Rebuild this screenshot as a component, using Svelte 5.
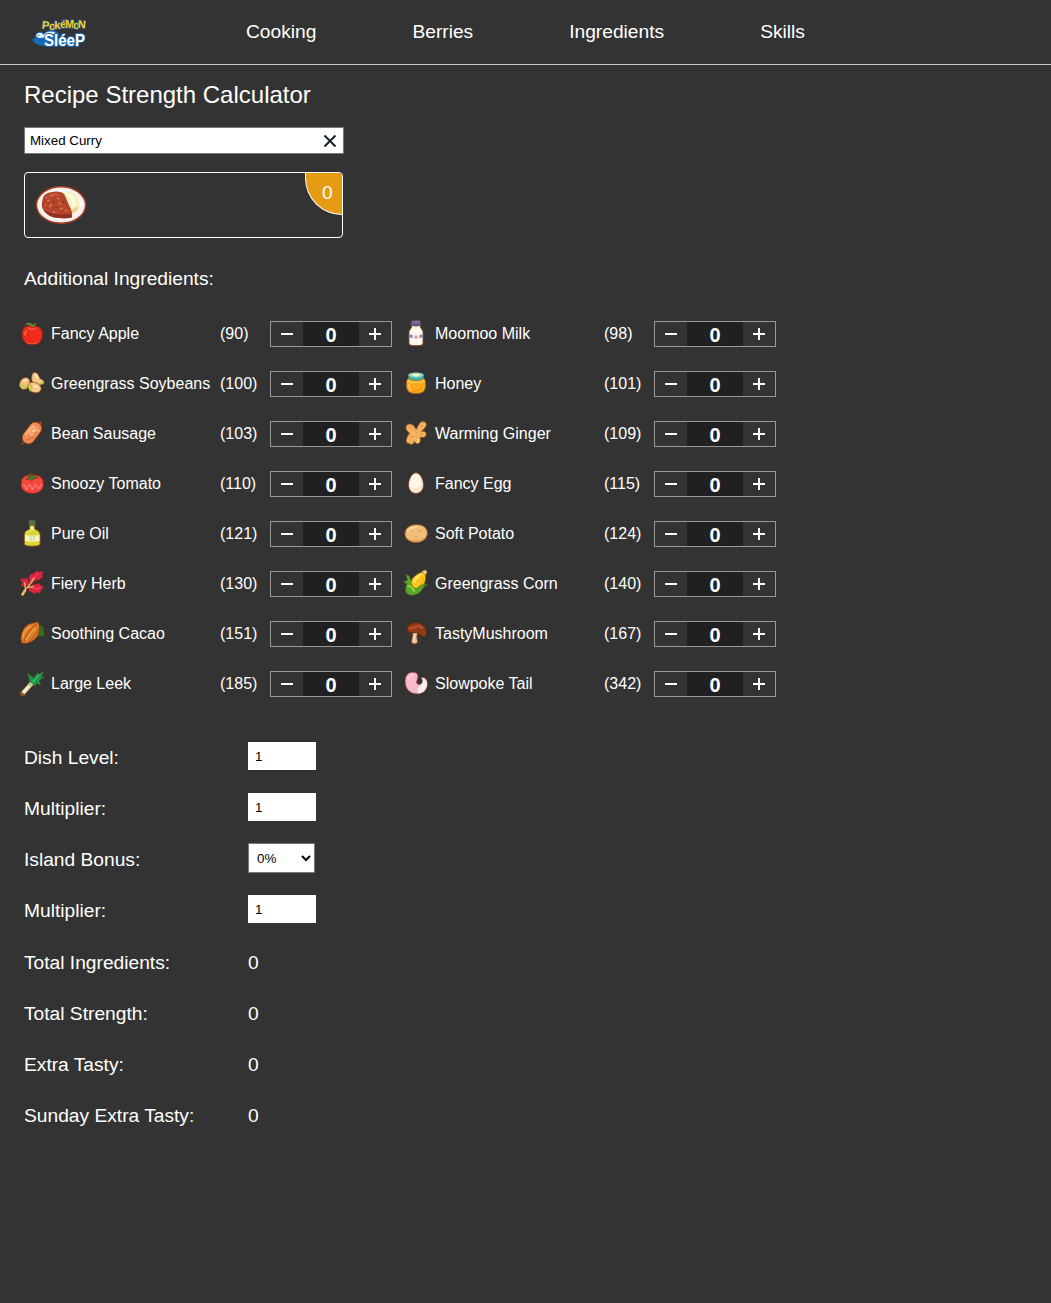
<script>
  const nav = ['Cooking', 'Berries', 'Ingredients', 'Skills'];

  let ingredients = $state([
    { id: 'apple', name: 'Fancy Apple', strength: 90, count: 0 },
    { id: 'milk', name: 'Moomoo Milk', strength: 98, count: 0 },
    { id: 'soy', name: 'Greengrass Soybeans', strength: 100, count: 0 },
    { id: 'honey', name: 'Honey', strength: 101, count: 0 },
    { id: 'sausage', name: 'Bean Sausage', strength: 103, count: 0 },
    { id: 'ginger', name: 'Warming Ginger', strength: 109, count: 0 },
    { id: 'tomato', name: 'Snoozy Tomato', strength: 110, count: 0 },
    { id: 'egg', name: 'Fancy Egg', strength: 115, count: 0 },
    { id: 'oil', name: 'Pure Oil', strength: 121, count: 0 },
    { id: 'potato', name: 'Soft Potato', strength: 124, count: 0 },
    { id: 'herb', name: 'Fiery Herb', strength: 130, count: 0 },
    { id: 'corn', name: 'Greengrass Corn', strength: 140, count: 0 },
    { id: 'cacao', name: 'Soothing Cacao', strength: 151, count: 0 },
    { id: 'mushroom', name: 'TastyMushroom', strength: 167, count: 0 },
    { id: 'leek', name: 'Large Leek', strength: 185, count: 0 },
    { id: 'tail', name: 'Slowpoke Tail', strength: 342, count: 0 }
  ]);

  let recipe = $state('Mixed Curry');
  let level = $state('1');
  let levelMultiplier = $state('1');
  let bonus = $state('0');
  let bonusMultiplier = $state('1');

  const total = $derived(ingredients.reduce((sum, i) => sum + i.count, 0));
  const strength = $derived(
    Math.round(
      ingredients.reduce((sum, i) => sum + i.count * i.strength, 0) *
        Number(levelMultiplier) * Number(bonusMultiplier) * (1 + Number(bonus) / 100)
    )
  );
</script>

{#snippet art(id)}
  <svg class="art" viewBox="0 0 28 28" stroke-linejoin="round" stroke-linecap="round" aria-hidden="true">
    {#if id === 'apple'}
      <path d="M14 7.500C9 5 4 9 4 15c0 6 4 10.500 8 10.500h5c4 0 7.500-4 7.500-10C24.500 9 19 5 14 7.500z" fill="#ee2a1b" stroke="#8a2c18" />
      <path d="M7.500 21.500c3 4 10 4 13 0-2 4-4 3.500-6.500 3.500s-5 0-6.500-3.500z" fill="#f0653a" />
      <path d="M8.500 12c-1.500 1-1.800 2.500-1.500 4M11 9.500q3 2 6 0" stroke="#ff6a55" stroke-width="1.300" fill="none" />
      <path d="M7 5.500c2-2.500 6-2.500 8 .5 1-2 2-2 3-1.500-1 2.500-2 3.500-4 3.500-1-1.500-4-2.500-7-2.500z" fill="#5a9a38" stroke="#6f3a1c" stroke-width=".6" />
    {:else if id === 'soy'}
      <path d="M14 12c-1-5 0-8.500 3-8.500s4 4 5 6c3 1 4.500 3 4 5-3 2.500-9 1.500-11.500-1.500z" fill="#f5c685" stroke="#8a4a20" stroke-width=".7" />
      <ellipse cx="6.800" cy="14.500" rx="5" ry="6.200" transform="rotate(28 6.800 14.500)" fill="#f5c17e" stroke="#8a4a20" stroke-width=".7" />
      <ellipse cx="16.500" cy="18.500" rx="7" ry="5" transform="rotate(22 16.500 18.500)" fill="#f7ca8b" stroke="#8a4a20" stroke-width=".7" />
      <path d="M2.500 17c2-.5 4 0 5 2M12 15.500c1.500 1.500 1.500 3.500.5 6M22 14.500c1.500 0 2.500-1 3-1.500" stroke="#b3d23f" stroke-width="2" fill="none" />
      <path d="M17 6c1.500 0 2 2 2 3M6 12l2-1M16 17l3 1" stroke="#ffe3b4" stroke-width="2" fill="none" />
    {:else if id === 'sausage'}
      <path d="M21 4l1.500-1 1 2M5 24l-1 1" stroke="#a5481f" stroke-width="1.500" fill="none" />
      <rect x="7.700" y="2" width="12.600" height="24" rx="6" transform="rotate(37 14 14)" fill="#ef8a52" stroke="#8a3d1b" stroke-width=".9" />
      <path d="M8 15l7-8" stroke="#f8a873" stroke-width="3" />
      <path d="M12 9.500l5-2 4 4-4 5.500-5-1.500z" fill="#f59b67" stroke="#ffc79c" stroke-width=".8" />
      <path d="M15 12l2-.5" stroke="#ffdcbd" stroke-width="1.500" />
      <path d="M9 21c4-1 8-5 10-8" stroke="#dd6c37" stroke-width="1.200" fill="none" />
    {:else if id === 'tomato'}
      <path d="M14 6C7 5 3 9 3 15s5 9.500 11.500 9.500S25.500 21 25.500 15 21 5 14 6z" fill="#f6473f" stroke="#8f2c1c" />
      <path d="M4.500 16.500l2-.5 2 4.500 3-5 3 5 3-5 3 4.500 3-4.500" fill="none" stroke="#ff837a" stroke-width="1.100" />
      <path d="M13.500 3.500l1 3.500 4-1.500-1 2.500 2.500 1-5 1-1 2-2.500-2-4 .5 3-2-1-2 3.500.5z" fill="#3e7c2c" stroke="#783019" stroke-width=".5" />
    {:else if id === 'oil'}
      <path d="M11.500 6v4C8 11.500 6.300 13 6.300 15.500v9c0 1.800 2.500 2.700 7.900 2.700s7.900-.9 7.900-2.700v-9c0-2.500-1.700-4-5.300-5.500V6z" fill="#dcd630" stroke="#7a4a24" stroke-width=".9" />
      <path d="M12.500 7.500h3.300v3.500l-3.300 1z" fill="#f0eb9a" />
      <rect x="10.800" y=".9" width="6.600" height="5.400" rx="1" fill="#4b7450" stroke="#72401f" stroke-width=".6" />
      <path d="M6.900 16q7.300 1 14.600 0v6q-7.300 1.500-14.600 0z" fill="#f4f3c4" />
      <circle cx="14.200" cy="19" r="2.200" fill="none" stroke="#c6c98c" />
      <path d="M8.500 13.500l1.800-1" stroke="#f6f3a0" />
    {:else if id === 'herb'}
      <path d="M8.500 17L2.500 17 4.500 14 2 9.500 7 10l2-2 1 3 1.500 5z" fill="#dd2243" stroke="#8a2a1c" stroke-width=".6" />
      <path d="M11.500 14L11 8l2-3 3-.5L18 2l3 1 5-1-2 3.500 1 2-4 3.500-4 .5-3 3.500z" fill="#e0234a" stroke="#8a2a1c" stroke-width=".6" />
      <path d="M11 19l4-3.500 4-.5 2-1 1 2 4 2-3 3-1 3-4-.5-2 1.500-2-2-3-.5z" fill="#dd2243" stroke="#8a2a1c" stroke-width=".6" />
      <path d="M14 11l7-7M14 19l8 1" stroke="#f2526c" stroke-width=".9" />
      <path d="M4.500 25.500C6 21 10 18 12.500 14.500L16 9M7.500 20L6.500 14M9 18.500l6.500-1" stroke="#e8a95c" stroke-width="1.500" fill="none" />
      <path d="M4.500 25.500l2.500-4" stroke="#f3bf72" stroke-width="2.400" />
    {:else if id === 'cacao'}
      <path d="M20 7l3-1 3 3-.5 3 1.300 3-3 3-5-2z" fill="#2f6f28" stroke="#55401a" stroke-width=".7" />
      <path d="M19.500 2.500c3.500 4 3 11-.5 15.500-3.500 5-10.500 7.500-15.500 6C1.500 17 4.500 8.500 11 5c3.500-1.500 6-.5 8.500-2.500z" fill="#dd7c27" stroke="#713714" stroke-width=".9" />
      <path d="M6 22.500C8 16 13 9 18.500 5M11 22.500c4-2.500 8-7 9.500-13" fill="none" stroke="#a84f14" stroke-width="1" />
      <path d="M5 18c.5-4 3.500-8.500 7.500-10.500M8.500 20.500c2-4 5.500-8.500 9.500-11" fill="none" stroke="#f29a48" stroke-width="1.500" />
    {:else if id === 'leek'}
      <path d="M4.500 24.500L15 13" stroke="#7a4628" stroke-width="5.500" />
      <path d="M5 24L15 13" stroke="#f2edd0" stroke-width="3.800" />
      <path d="M12.500 15.500l3-3.500" stroke="#a9d48b" stroke-width="4" />
      <path d="M11.500 12L9.500 4l4.500 3.500 2 1.500 3.500-5.500 1 2L26 2l-2.500 5.500 3 .5-5 3 1 5.500-4-2-1.500 3-2-3z" fill="#159a4a" stroke="#5c4a24" stroke-width=".7" />
      <path d="M15 13l6-7" stroke="#3fc06c" stroke-width="1.200" />
      <path d="M2.800 23.500l3.500 3" stroke="#8a4c2a" stroke-width="1.800" />
    {:else if id === 'milk'}
      <path d="M9.500 6.500v2.500C7.500 10.500 7 12 7 14v10c0 2 2 2.600 7 2.600s7-.6 7-2.600V14c0-2-.5-3.500-2.500-5V6.500z" fill="#fffaf0" stroke="#8d482b" stroke-width=".9" />
      <path d="M9.300 2q4.700-1.300 9.400 0v4.500q-4.700 1.300-9.400 0z" fill="#625e99" stroke="#764434" stroke-width=".7" />
      <path d="M11 3h6" stroke="#8b89bd" />
      <path d="M7.500 15.500q6.500 1.500 13 0v3q-6.500 1.500-13 0z" fill="#7783c8" />
      <circle cx="14" cy="17.500" r="3.500" fill="#fdeeee" /><path d="M12.500 18.500l1.500-2 1.500 2z" fill="#ef8a94" stroke="#e87682" stroke-width=".6" />
    {:else if id === 'honey'}
      <path d="M6.500 9C3.500 12 3.500 20 7 23c3 2 11 2 14 0 3.500-3 3.500-11 .5-14z" fill="#fba81a" stroke="#9c632c" />
      <path d="M6 12c5 2 11 2 16 0" stroke="#ffc440" stroke-width="2" fill="none" />
      <path d="M6.500 5.500v4c3 2.500 12 2.500 15 0v-4z" fill="#45b3aa" stroke="#5c6650" stroke-width=".6" />
      <ellipse cx="14" cy="6" rx="7.600" ry="2.600" fill="#7fdcd0" /><ellipse cx="14" cy="6" rx="4" ry="1.400" fill="#fff3b8" />
      <path d="M6.800 15c0 3 1 5 2 6" stroke="#ffdc72" fill="none" /><path d="M11 22.500q6 0 9-4" stroke="#f48a14" fill="none" />
    {:else if id === 'ginger'}
      <path d="M14.500 10l2.500-5c2-3.500 7-3 7.500.5-.5 3-3 4.500-5 7 2.500-1 5 .5 4.700 3-.5 3-3 3.500-6 2.500 1 3 .3 5.500-1.700 6.500-2 .5-3.500-.5-4-2-1.500 3.500-3.500 3.500-5 2-1.500.5-3.500-.5-3.200-3.500.2-3 2.200-5 3.200-7-3-2-4.500-5-3-7.500 3-3 7-1 8 1.500z" fill="#f2b35c" stroke="#945426" stroke-width=".8" />
      <path d="M18 6l3 1M7 8.500l3-.5M8 17l3 1M18.500 14.500l2.500 1M13 12l2 2" stroke="#dd9240" stroke-width=".8" />
      <path d="M14.800 20.500h2v3l-1.500 1z" fill="#ffdf62" />
    {:else if id === 'egg'}
      <path d="M14 3.800c4.500 0 7.500 7 7.500 12S18.500 24.500 14 24.500s-7.500-3.500-7.500-8.700S9.500 3.800 14 3.800z" fill="#f7e8cf" stroke="#7f4228" />
      <path d="M13.500 4.500c-4 1-6.500 8-6 13 4 3 9 1.500 11.500-2S18 5.500 13.500 4.500z" fill="#fdf6e8" />
    {:else if id === 'potato'}
      <path d="M3 13c1-5 6-7.500 12-7.500S25.500 9 25.500 14 21 23.500 14 23.500 1.500 19 3 13z" fill="#efbf79" stroke="#8b4524" />
      <path d="M4 18c4 4 15 4 20-1-2 8-16 8-20 1z" fill="#e0a257" />
      <path d="M17.500 12l2-.5M13 18h2M9 12v.2" stroke="#c98a45" stroke-width=".8" /><path d="M6.500 11c2-2 5-3 8-3" stroke="#fbd49b" stroke-width="2" fill="none" />
    {:else if id === 'corn'}
      <path d="M19.500 3.500l1.500-2 3.500-.5L25 4l-2 2.500z" fill="#efd3a5" stroke="#8a5a2c" stroke-width=".6" />
      <path d="M8.500 18c-1.500-6 3-12 12-15l3 3c1 7-3 13-9 18z" fill="#fac81c" stroke="#93691f" stroke-width=".7" />
      <path d="M12.500 13C13.500 9 16 7 19 5.500" stroke="#ffe566" stroke-width="2.200" fill="none" />
      <path d="M15 20c3.500-3 6-7 6.500-11" stroke="#eda90f" stroke-width="1" fill="none" />
      <path d="M4 5.500c4 1 5.500 5 5 9 1 3 3 5 6 5 3-3 6-4.500 11-4-3.500 1-5 3-6.500 6-3 4.500-9.500 5.500-13 4-4.500-2-3-7-1.500-10.500L1.500 13l4-2z" fill="#5aa82b" stroke="#51601d" stroke-width=".7" />
      <path d="M6 17c3 0 5 2 6 5" stroke="#8fcf42" stroke-width="2.200" fill="none" />
    {:else if id === 'mushroom'}
      <path d="M10.500 13l6 0c-2.500 4-1.500 7-.8 9.500-.7 3.300-6 3.300-6.200 0 .5-4 1.500-5 1-9.500z" fill="#ecc390" stroke="#81421f" stroke-width=".8" />
      <path d="M5 10c1-7.500 14-9 18-1.500 2 4 2 8.500-.5 9.500-4-1-5-3.500-8.500-4.500-5 1-9.500 0-9-3.500z" fill="#923c17" stroke="#5f2812" stroke-width=".9" />
      <path d="M8 9.500c2-2 4 0 6-1.500s4-1 6 1" fill="none" stroke="#b94e27" stroke-width="2.200" />
      <path d="M12.500 16.500l-.8 5.500" stroke="#fddeb2" stroke-width="1.600" />
    {:else if id === 'tail'}
      <path d="M14.500 4C8.500 1 3 5 3 12.500c0 7.500 5 12.500 12 12.500 7.500 0 11-5.500 10.500-11C25 9.500 21.500 7.500 19 8.500c1.500 2 2.500 5-.5 6.500-2.500 1-4.500-.5-3.500-3 1-2.500 2-6-.5-8z" fill="#f9b9cc" stroke="#823a2b" stroke-width=".9" />
      <path d="M19.500 9c3.500-.5 5.500 2.500 5.500 6 0 5-4 9.500-9 9.500l-.5-5.500c2-.5 2-2 3.500-3.500 2.500-1.500 2-4.500.5-6.500z" fill="#f7efec" />
      <path d="M6.500 11c.5-3 2-5 4.500-5" stroke="#ffd0df" stroke-width="1.800" fill="none" />
    {/if}
  </svg>
{/snippet}

<header>
  <svg class="logo" viewBox="0 0 56 34" role="img" aria-label="Pokémon Sleep">
    <path d="M1 25c2-1 3-3 3.500-5 2-4.500 7-3.500 8.500-1.500 5-5 12-4 15 0l-3 12c-8 2-20 1-24-5.500z" fill="#1769b5" />
    <path d="M5 21c1-4 6-4 7-1 5-5 11-4 14-1-6-1-8 3-13 3.500-3 .5-5 1.500-8-1.500z" fill="#f1f8ff" />
    <path d="M6.500 21l2-1" stroke="#336d9e" />
    <g class="poke">
      <text x="11" y="14" transform="rotate(7 15 10)">P</text>
      <text x="18" y="14.500">o</text>
      <text x="23.300" y="13.500">k</text>
      <text x="29" y="13">é</text>
      <text x="34" y="12.500">M</text>
      <text x="42" y="13.500">o</text>
      <text x="46.800" y="13" transform="rotate(5 50 10)">N</text>
    </g>
    <text class="sleep" x="13" y="31" textLength="41" lengthAdjust="spacingAndGlyphs">SléeP</text>
  </svg>
  <nav>
    {#each nav as item}
      <a href="#{item.toLowerCase()}">{item}</a>
    {/each}
  </nav>
</header>

<main>
  <h1>Recipe Strength Calculator</h1>

  <div class="search">
    <input bind:value={recipe} aria-label="Recipe" />
    <button aria-label="Clear recipe" onclick={() => (recipe = '')}>
      <svg viewBox="0 0 14 14"><path d="M1.500 1.500l11 11M12.500 1.500l-11 11" /></svg>
    </button>
  </div>

  <section class="card">
    <svg class="dish" viewBox="0 0 52 40" aria-hidden="true">
      <ellipse cx="26" cy="20" rx="24.600" ry="18.200" fill="#f8f0f0" stroke="#a23c1c" stroke-width="1.500" />
      <ellipse cx="26" cy="19.500" rx="20.500" ry="14.500" fill="#fffcfc" />
      <path d="M27 6.500c8-2 15 2 17 8.500 2 6 0 11-4 13l-5 1z" fill="#f8efc2" />
      <path d="M31 9c5 1 9 6 8 12" fill="none" stroke="#fdf9dc" stroke-width="3.500" />
      <path d="M37 25l6-4c0 4-2 6-4 7l-3 .5z" fill="#eecf8c" />
      <path d="M8 13c1-4 6-6 10-6 4-1 8-.5 11 2 2 3 3 7 5 11 2 4 4 8 3 12-5 2-9 1-15 1C14 32 8 27 7 22c-.5-3 0-6 1-9z" fill="#b3452c" />
      <path d="M9 25c6 5 15 4 27 4.500l1 3c-6 1.500-12 .5-16 0-5 0-9-3-12-7.500z" fill="#8f2f20" />
      <path d="M10 14c3-4 9-5 14-4" fill="none" stroke="#c4573a" stroke-width="2" />
      <path d="M12 16l3-1M14 22l3-3M22 13l2 1M25 24l3-1M18 27l2 0" stroke="#e08a4a" stroke-width="1.300" />
      <path d="M18 16l1 2M28 16l1 2M21 23l1-1" stroke="#8c2d1d" stroke-width="1.600" />
      <path d="M16 11l2 0M24 18l2 1M30 26l2-1M10 20l1 1" stroke="#ee7526" stroke-width="1.500" />
    </svg>
    <span class="badge">{total}</span>
  </section>

  <h2>Additional Ingredients:</h2>

  <div class="ingredients">
    {#each ingredients as item (item.id)}
      <div class="ingredient">
        {@render art(item.id)}
        <span class="name">{item.name}</span>
        <span class="strength">({item.strength})</span>
        <div class="stepper">
          <button aria-label="Remove {item.name}" onclick={() => (item.count = Math.max(0, item.count - 1))}>
            <svg viewBox="0 0 12 12"><path d="M0 6h12" /></svg>
          </button>
          <output>{item.count}</output>
          <button aria-label="Add {item.name}" onclick={() => (item.count += 1)}>
            <svg viewBox="0 0 12 12"><path d="M0 6h12M6 0v12" /></svg>
          </button>
        </div>
      </div>
    {/each}
  </div>

  <div class="form">
    <div class="row"><label for="level">Dish Level:</label><input id="level" bind:value={level} /></div>
    <div class="row"><label for="lm">Multiplier:</label><input id="lm" bind:value={levelMultiplier} /></div>
    <div class="row">
      <label for="bonus">Island Bonus:</label>
      <select id="bonus" bind:value={bonus}>
        <option value="0">0%</option>
        <option value="5">5%</option>
        <option value="10">10%</option>
      </select>
    </div>
    <div class="row"><label for="bm">Multiplier:</label><input id="bm" bind:value={bonusMultiplier} /></div>
    <div class="row"><span>Total Ingredients:</span><span>{total}</span></div>
    <div class="row"><span>Total Strength:</span><span>{strength}</span></div>
    <div class="row"><span>Extra Tasty:</span><span>{strength * 2}</span></div>
    <div class="row"><span>Sunday Extra Tasty:</span><span>{strength * 3}</span></div>
  </div>
</main>

<style>
  :global(body) {
    background: #333;
    color: #fff;
    font-family: 'Liberation Sans', Arial, sans-serif;
    font-size: 19.2px;
  }
  header {
    display: flex;
    align-items: center;
    height: 64px;
    border-bottom: 1px solid #ccc;
  }
  .logo {
    flex: none;
    width: 56px;
    height: 34px;
    margin-left: 31px;
    overflow: visible;
  }
  .logo text {
    font-family: 'Liberation Sans', Arial, sans-serif;
    font-weight: bold;
    paint-order: stroke;
    stroke-linejoin: round;
  }
  .poke text {
    font-size: 11px;
    fill: #f5cd16;
    stroke: #235795;
    stroke-width: 1.3px;
  }
  .logo .sleep {
    font-size: 16.5px;
    fill: #fff;
    stroke: #1769b5;
    stroke-width: 2px;
  }
  nav {
    display: flex;
    gap: 96px;
    margin-left: 159px;
  }
  nav a {
    color: #fff;
    text-decoration: none;
    line-height: 22px;
  }
  main {
    padding: 16px 24px 0;
  }
  h1 {
    margin: 0;
    font-size: 24px;
    font-weight: normal;
    line-height: 28px;
  }
  .search {
    display: flex;
    align-items: center;
    box-sizing: border-box;
    width: 320px;
    height: 27px;
    margin-top: 18px;
    border: 1px solid #767676;
    background: #fff;
  }
  .search input {
    flex: 1;
    min-width: 0;
    padding: 0 5px;
    border: 0;
    outline: 0;
    background: none;
    font: 13.333px 'Liberation Sans', Arial, sans-serif;
    color: #000;
  }
  button {
    display: flex;
    align-items: center;
    justify-content: center;
    padding: 0;
    border: 0;
    background: none;
  }
  .search button {
    width: 26px;
    height: 25px;
    padding-top: 1px;
  }
  .search svg {
    width: 14px;
    height: 14px;
    stroke: #18202c;
    stroke-width: 2;
  }
  .card {
    display: flex;
    justify-content: space-between;
    box-sizing: border-box;
    width: 319px;
    height: 66px;
    margin-top: 18px;
    border: 1px solid #fff;
    border-radius: 4px;
    overflow: hidden;
  }
  .dish {
    width: 52px;
    height: 40px;
    margin: 12px 0 0 10px;
  }
  .badge {
    box-sizing: border-box;
    width: 37px;
    height: 42px;
    padding-left: 16px;
    border: solid #fff;
    border-width: 0 0 1px 1px;
    border-radius: 0 0 0 37px;
    background: #e59b12;
    line-height: 39px;
  }
  h2 {
    margin: 29px 0 0;
    font-size: 19.2px;
    font-weight: normal;
    line-height: 23px;
  }
  .ingredients {
    display: grid;
    grid-template-columns: repeat(2, 374px);
    grid-auto-rows: 50px;
    column-gap: 10px;
    margin: 18px 0 0 -6px;
    font-size: 16px;
  }
  .ingredient {
    display: grid;
    grid-template-columns: 33px 169px 50px 122px;
    align-items: center;
  }
  .art {
    width: 28px;
    height: 28px;
  }
  .name,
  .strength {
    padding-top: 2px;
    white-space: nowrap;
  }
  .stepper {
    display: grid;
    grid-template-columns: 32px 56px 32px;
    box-sizing: border-box;
    height: 26px;
    margin-top: 2px;
    border: 1px solid #999;
  }
  .stepper svg {
    width: 12px;
    height: 12px;
    fill: none;
    stroke: #fff;
    stroke-width: 2;
  }
  .stepper output {
    height: 24px;
    background: #202022;
    font-size: 20px;
    font-weight: bold;
    line-height: 27px;
    text-align: center;
  }
  .form {
    display: grid;
    grid-auto-rows: 51px;
    margin-top: 23px;
  }
  .row {
    display: grid;
    grid-template-columns: 224px auto;
    align-items: center;
    justify-content: start;
  }
  .row label {
    padding-top: 2px;
  }
  .row span {
    padding-top: 4px;
  }
  .row input {
    box-sizing: border-box;
    width: 68px;
    height: 28px;
    margin-bottom: 1px;
    padding: 0 7px;
    border: 0;
    background: #fff;
    color: #000;
    font: 13.333px 'Liberation Sans', Arial, sans-serif;
  }
  .row select {
    box-sizing: border-box;
    width: 67px;
    height: 30px;
    margin: 0 0 1px;
    padding: 1px 0 0 4px;
    border: 1px solid #767676;
    border-radius: 0;
    background: #fff;
    color: #000;
    font: 13.333px 'Liberation Sans', Arial, sans-serif;
  }
</style>
